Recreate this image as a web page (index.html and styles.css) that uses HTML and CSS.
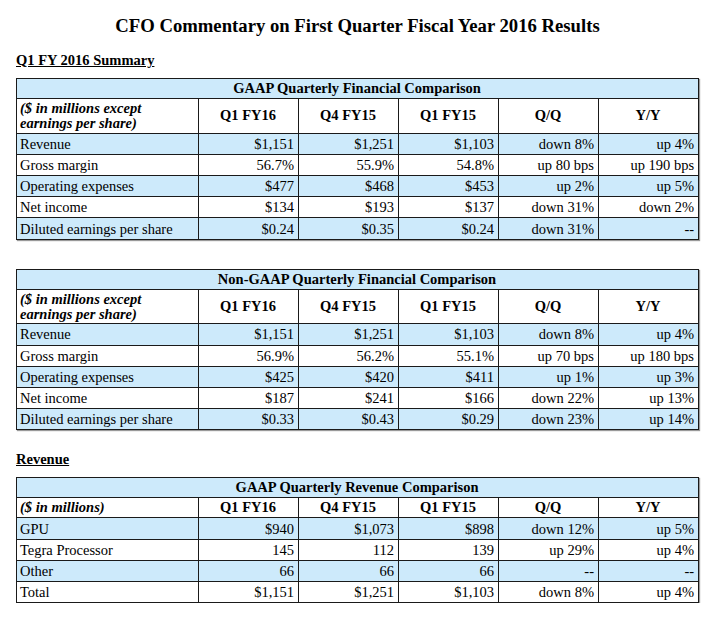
FILE: index.html
```html
<!DOCTYPE html>
<html>
<head>
<meta charset="utf-8">
<link rel="stylesheet" href="styles.css">
</head>
<body>
<div class="page">
  <h1 class="title">CFO Commentary on First Quarter Fiscal Year 2016 Results</h1>
  <h2 class="section first">Q1 FY 2016 Summary</h2>
  <table class="fin">
    <colgroup><col class="c-label"><col class="c-num"><col class="c-num"><col class="c-num"><col class="c-num"><col class="c-num"></colgroup>
    <tr class="cap"><td colspan="6">GAAP Quarterly Financial Comparison</td></tr>
    <tr class="head tall"><td class="unit">($ in millions except<br>earnings per share)</td><td>Q1 FY16</td><td>Q4 FY15</td><td>Q1 FY15</td><td>Q/Q</td><td>Y/Y</td></tr>
    <tr class="blue"><td class="lbl">Revenue</td><td>$1,151</td><td>$1,251</td><td>$1,103</td><td>down 8%</td><td>up 4%</td></tr>
    <tr><td class="lbl">Gross margin</td><td>56.7%</td><td>55.9%</td><td>54.8%</td><td>up 80 bps</td><td>up 190 bps</td></tr>
    <tr class="blue"><td class="lbl">Operating expenses</td><td>$477</td><td>$468</td><td>$453</td><td>up 2%</td><td>up 5%</td></tr>
    <tr><td class="lbl">Net income</td><td>$134</td><td>$193</td><td>$137</td><td>down 31%</td><td>down 2%</td></tr>
    <tr class="blue"><td class="lbl">Diluted earnings per share</td><td>$0.24</td><td>$0.35</td><td>$0.24</td><td>down 31%</td><td>--</td></tr>
  </table>

  <table class="fin second">
    <colgroup><col class="c-label"><col class="c-num"><col class="c-num"><col class="c-num"><col class="c-num"><col class="c-num"></colgroup>
    <tr class="cap"><td colspan="6">Non-GAAP Quarterly Financial Comparison</td></tr>
    <tr class="head tall"><td class="unit">($ in millions except<br>earnings per share)</td><td>Q1 FY16</td><td>Q4 FY15</td><td>Q1 FY15</td><td>Q/Q</td><td>Y/Y</td></tr>
    <tr class="blue"><td class="lbl">Revenue</td><td>$1,151</td><td>$1,251</td><td>$1,103</td><td>down 8%</td><td>up 4%</td></tr>
    <tr><td class="lbl">Gross margin</td><td>56.9%</td><td>56.2%</td><td>55.1%</td><td>up 70 bps</td><td>up 180 bps</td></tr>
    <tr class="blue"><td class="lbl">Operating expenses</td><td>$425</td><td>$420</td><td>$411</td><td>up 1%</td><td>up 3%</td></tr>
    <tr><td class="lbl">Net income</td><td>$187</td><td>$241</td><td>$166</td><td>down 22%</td><td>up 13%</td></tr>
    <tr class="blue"><td class="lbl">Diluted earnings per share</td><td>$0.33</td><td>$0.43</td><td>$0.29</td><td>down 23%</td><td>up 14%</td></tr>
  </table>

  <h2 class="section rev">Revenue</h2>
  <table class="fin">
    <colgroup><col class="c-label"><col class="c-num"><col class="c-num"><col class="c-num"><col class="c-num"><col class="c-num"></colgroup>
    <tr class="cap"><td colspan="6">GAAP Quarterly Revenue Comparison</td></tr>
    <tr class="head"><td class="unit">($ in millions)</td><td>Q1 FY16</td><td>Q4 FY15</td><td>Q1 FY15</td><td>Q/Q</td><td>Y/Y</td></tr>
    <tr class="blue"><td class="lbl">GPU</td><td>$940</td><td>$1,073</td><td>$898</td><td>down 12%</td><td>up 5%</td></tr>
    <tr><td class="lbl">Tegra Processor</td><td>145</td><td>112</td><td>139</td><td>up 29%</td><td>up 4%</td></tr>
    <tr class="blue"><td class="lbl">Other</td><td>66</td><td>66</td><td>66</td><td>--</td><td>--</td></tr>
    <tr><td class="lbl">Total</td><td>$1,151</td><td>$1,251</td><td>$1,103</td><td>down 8%</td><td>up 4%</td></tr>
  </table>
</div>
</body>
</html>
```

FILE: styles.css
```css
html, body {
  margin: 0;
  padding: 0;
  background: #ffffff;
}
body {
  font-family: "Liberation Serif", "Times New Roman", serif;
  color: #000;
}
.page {
  width: 715px;
  padding: 0 0 0 16px;
  box-sizing: border-box;
}
.title {
  margin: 0;
  padding-top: 14px;
  font-size: 18.7px;
  line-height: 24px;
  font-weight: bold;
  text-align: center;
  padding-right: 16px;
}
.section {
  margin: 0;
  font-size: 14.5px;
  line-height: 16px;
  font-weight: bold;
  text-decoration: underline;
}
.section.first {
  margin-top: 14px;
  margin-bottom: 10px;
}
.section.rev {
  margin-top: 21px;
  margin-bottom: 10px;
}
.fin {
  border-collapse: collapse;
  table-layout: fixed;
  width: 682px;
  font-size: 14.5px;
  box-shadow: 1px 1px 1px #9a9a9a;
}
.fin.second {
  margin-top: 29px;
}
.c-label { width: 182px; }
.c-num { width: 100px; }
.fin td {
  border: 1px solid #1a1a1a;
  padding: 0 4px 0 3px;
  height: 20.2px;
  line-height: 20px;
  text-align: right;
  white-space: nowrap;
  vertical-align: middle;
}
.fin td.lbl {
  text-align: left;
}
.fin tr.blue td {
  background: #cdeafb;
}
.fin tr.cap td {
  background: #cdeafb;
  text-align: center;
  font-weight: bold;
  height: 19.2px;
  line-height: 19px;
}
.fin tr.head td {
  text-align: center;
  font-weight: bold;
  height: 19px;
  line-height: 19px;
}
.fin tr.head.tall td {
  height: 33.5px;
}
.fin tr.head td.unit {
  text-align: left;
  font-style: italic;
  line-height: 15px;
}
```
